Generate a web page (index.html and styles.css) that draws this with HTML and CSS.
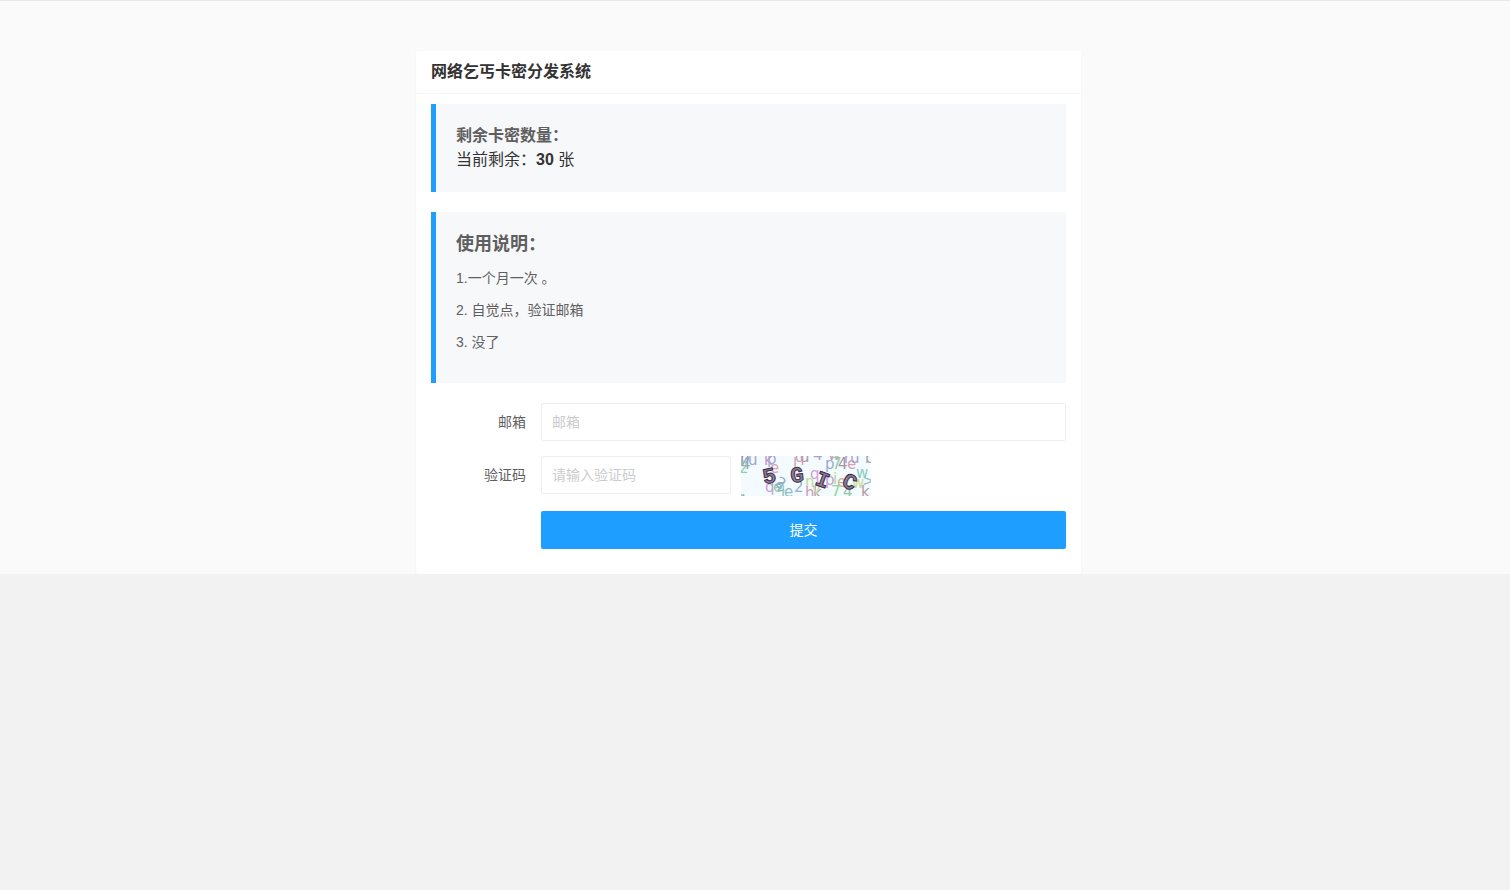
FILE: index.html
```html
<!DOCTYPE html>
<html lang="zh-CN">

<head>
  <meta charset="UTF-8">
  <meta name="viewport" content="width=device-width, initial-scale=1">
  <title>网络乞丐卡密分发系统</title>
  <link rel="stylesheet" href="styles.css">
</head>

<body>
  <div class="wrapper">
    <main class="card">
      <h1 class="card-header">网络乞丐卡密分发系统</h1>
      <div class="card-body">
        <section class="quote quote-stock">
          <h2>剩余卡密数量：</h2>
          <p>当前剩余：<b>30</b> 张</p>
        </section>
        <section class="quote quote-help">
          <h2>使用说明：</h2>
          <p>1.一个月一次 。</p>
          <p>2. 自觉点，验证邮箱</p>
          <p>3. 没了</p>
        </section>

        <form class="form" action="#" method="post">
          <div class="form-item">
            <label for="email">邮箱</label>
            <input class="input" type="text" id="email" name="email" placeholder="邮箱">
          </div>
          <div class="form-item">
            <label for="code">验证码</label>
            <input class="input input-code" type="text" id="code" name="code" placeholder="请输入验证码">
            <svg class="captcha" width="130" height="40" viewBox="0 0 130 40">
              <rect width="130" height="40" fill="#f3fbff"/>
              <!-- noise -->
              <g class="noise">
                <text x="-1" y="7" fill="#a08bab">p</text>
                <text x="0" y="13" fill="#8fa5c4">4</text>
                <text x="-2" y="17" fill="#8fd0a4">2</text>
                <text x="7" y="9" fill="#9ba6c6">u</text>
                <text x="23" y="9" fill="#c295d0">k</text>
                <text x="26" y="8" fill="#a3a5cf">p</text>
                <text x="29" y="17" fill="#dba3b8">e</text>
                <text x="24" y="36" fill="#c79bd9">q</text>
                <text x="32" y="36" fill="#93d3a2">e</text>
                <text x="33" y="29" fill="#91aec7" transform="rotate(30 33 29)">2</text>
                <text x="36" y="35" fill="#91aec7">z</text>
                <text x="40" y="41" fill="#8fc6b5">l</text>
                <text x="43" y="41" fill="#8dbfc5">e</text>
                <text x="53" y="36" fill="#98b0cf">2</text>
                <text x="52" y="13" fill="#c8a6b5">l</text>
                <text x="54" y="6" fill="#d39bb1">q</text>
                <text x="59" y="6" fill="#b697a8">d</text>
                <text x="72" y="4" fill="#ad9fca">4</text>
                <text x="87" y="4" fill="#c49bb4">w</text>
                <text x="69" y="23" fill="#d4a0dc">q</text>
                <text x="64" y="31" fill="#bfdc99">n</text>
                <text x="64" y="42" fill="#ce9bc0">h</text>
                <text x="72" y="42" fill="#bb9cb5">k</text>
                <text x="71" y="38" fill="#c1d89b">v</text>
                <text x="84" y="13" fill="#99a9d3">p</text>
                <text x="91" y="13" fill="#8fcf9b">7</text>
                <text x="97" y="13" fill="#a993a5">4</text>
                <text x="106" y="13" fill="#d6a1bb">e</text>
                <text x="103" y="7" fill="#bb9ec2">r</text>
                <text x="109" y="7" fill="#a9a0cb">u</text>
                <text x="124" y="7" fill="#a3a1b5">b</text>
                <text x="84" y="29" fill="#c89be0">p</text>
                <text x="92" y="28" fill="#a7dc90">i</text>
                <text x="96" y="31" fill="#ccb398">e</text>
                <text x="115" y="22" fill="#8fc9c4">w</text>
                <text x="111" y="32" fill="#c7db96">w</text>
                <text x="121" y="30" fill="#98bfc2">&gt;</text>
                <text x="90" y="41" fill="#91d3a2">7</text>
                <text x="102" y="41" fill="#91c7a5">4</text>
                <text x="120" y="41" fill="#b298a8">k</text>
                <text x="-5" y="47" fill="#8fb2bd">q</text>
              </g>
              <!-- code -->
              <g class="code">
                <text x="28" y="27" transform="rotate(-12 28 19)">5</text>
                <text x="56" y="26" transform="rotate(-6 56 18)">G</text>
                <text x="82" y="31" transform="rotate(20 82 23)">I</text>
                <text x="109" y="33" transform="rotate(25 109 25)">C</text>
              </g>
            </svg>
          </div>
          <div class="form-item form-action">
            <button class="btn" type="submit">提交</button>
          </div>
        </form>
      </div>
    </main>
  </div>
</body>

</html>
```

FILE: styles.css
```css
* {
  box-sizing: border-box;
}
body {
  margin: 0;
  background: #f2f2f2;
  color: #333;
  font: 14px/22px "Liberation Sans", "Noto Sans CJK SC", sans-serif;
}
h1, h2, p {
  margin: 0;
}
.wrapper {
  padding: 50px 13px 0 0;
  border-top: 1px solid #e8e8e8;
  background: #fafafa;
}
.card {
  max-width: 665px;
  margin: 0 auto;
  border-radius: 2px;
  background: #fff;
  box-shadow: 0 1px 2px rgba(0, 0, 0, .05);
}
.card-header {
  padding: 0 15px;
  border-bottom: 1px solid #f6f6f6;
  font-size: 16px;
  line-height: 42px;
}
.card-body {
  padding: 10px 15px 25px;
}
.quote {
  margin-bottom: 20px;
  padding: 20px;
  border-left: 5px solid #1e9fff;
  background: #f7f8fa;
}
.quote h2 {
  color: #5f5f5f;
}
.quote-stock h2, .quote-stock p {
  font-size: 16px;
  line-height: 24px;
}
.quote-help {
  color: #5f5f5f;
}
.quote-help h2 {
  margin-bottom: 10px;
  font-size: 18px;
  line-height: 25px;
}
.quote-help p {
  margin-bottom: 10px;
}
.form {
  display: flex;
  flex-direction: column;
  gap: 15px;
}
.form-item {
  display: flex;
  align-items: flex-start;
}
.form-item label {
  flex: 0 0 110px;
  padding: 8px 15px;
  color: #5f5f5f;
  text-align: right;
}
.input {
  flex: 1;
  min-width: 0;
  height: 38px;
  padding: 0 10px;
  border: 1px solid #eee;
  border-radius: 2px;
  outline: none;
  background: #fff;
  color: #333;
  font: inherit;
}
.input::placeholder {
  color: #ccc;
}
.input:focus {
  border-color: #1e9fff;
}
.input-code {
  flex: 0 1 190px;
}
.captcha {
  flex: none;
  margin-left: 10px;
  cursor: pointer;
}
.noise {
  font: 15px "DejaVu Sans", sans-serif;
}
.code {
  fill: #8d7f96;
  stroke: #3d2a47;
  stroke-width: 1;
  font: bold 22px "Liberation Mono", monospace;
  text-anchor: middle;
}
.form-action {
  padding-left: 110px;
}
.btn {
  flex: 1;
  height: 38px;
  border: none;
  border-radius: 2px;
  background: #1e9fff;
  color: #fff;
  font: inherit;
  cursor: pointer;
}
.btn:hover {
  opacity: .8;
}
```
